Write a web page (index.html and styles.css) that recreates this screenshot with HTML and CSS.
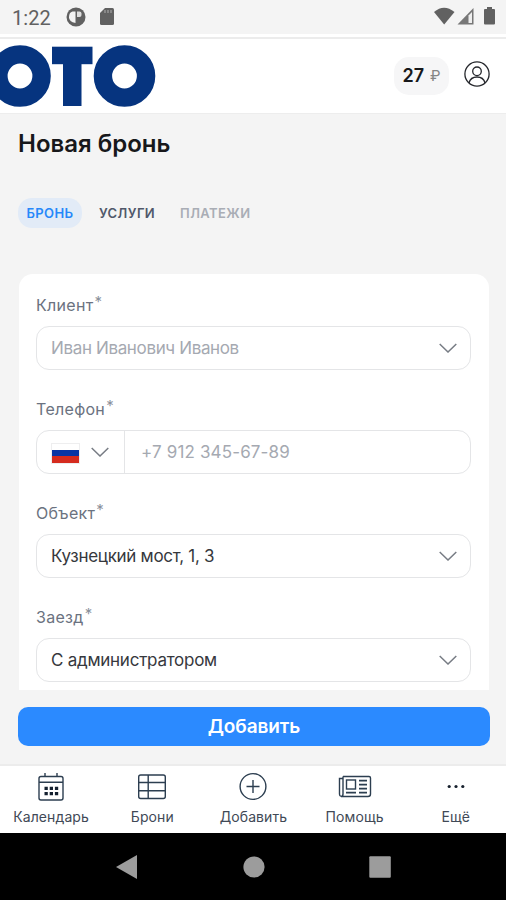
FILE: index.html
```html
<!DOCTYPE html>
<html lang="ru">
<head>
<meta charset="utf-8">
<title>Новая бронь</title>
<link rel="stylesheet" href="styles.css">
</head>
<body>
<div class="status">
  <span class="clock">1:22</span>
  <svg class="st-app" width="20" height="20" viewBox="0 0 20 20"><circle cx="10" cy="10" r="9.500" fill="#616161"/><path d="M9.500 4.500v11.500Q3 15 3 10.200T6.500 4.500z" fill="#f4f4f4"/><path d="M11 4.500h2.500q2 0 2 2v1.500q0 2-2 2H11z" fill="#dedede"/></svg>
  <svg class="st-card" width="16" height="20" viewBox="0 0 16 20"><path d="M6 1h7.500Q15 1 15 2.500v14q0 1.500-1.500 1.500h-11Q1 18 1 16.500V6z" fill="#616161"/><path d="M6 3v3M9 3v3M12 3v3" stroke="#999" stroke-width="1.400"/></svg>
  <svg class="st-right" width="64" height="20" viewBox="0 0 64 20"><path d="M1 5q10-8.500 20.500 0L11.200 17.500z" fill="#616161"/><path d="M24.500 17.500L40.500 1v16.500z" fill="#777"/><path d="M35.500 8.500l3.500-3.500v11h-3.500z" fill="#eee"/><path d="M54 0h5v2h2q1 0 1 1v13.500q0 1-1 1h-9q-1 0-1-1V3q0-1 1-1h2z" fill="#616161"/></svg>
</div>
<header class="header">
  <svg class="logo" width="156" height="64" viewBox="0 0 156 64" role="img" aria-label="ОТО">
    <g fill="none" stroke="#06347f"><circle cx="20" cy="32" r="21.600" stroke-width="18.400"/><circle cx="124.500" cy="32" r="21.600" stroke-width="18.400"/></g>
    <g fill="#06347f"><rect x="52" y="2.700" width="40.500" height="17.500"/><rect x="63" y="3" width="18.500" height="59"/></g>
  </svg>
  <div class="balance"><b>27</b><span>₽</span></div>
  <svg class="user" width="26" height="26" viewBox="0 0 26 26" fill="none" stroke="#26282d" stroke-width="1.300"><circle cx="13" cy="13" r="12.100"/><circle cx="13" cy="10.300" r="4.300"/><path d="M5 22q1.500-6 8-6t8 6"/></svg>
</header>
<main class="main">
  <h1 class="title">Новая бронь</h1>
  <nav class="tabs"><span class="tab active">БРОНЬ</span><span class="tab services">УСЛУГИ</span><span class="tab disabled">ПЛАТЕЖИ</span></nav>
  <section class="card">
    <div class="field"><label><span>Клиент</span><sup>*</sup></label>
      <div class="input"><span class="ph name">Иван Иванович Иванов</span><svg class="chev" width="18" height="10" viewBox="0 0 18 10"><path d="M.7 1L9 9l8.300-8"/></svg></div></div>
    <div class="field"><label><span>Телефон</span><sup>*</sup></label>
      <div class="input phone"><div class="country"><div class="flag"><i></i><i></i><i></i></div><svg class="chev" width="18" height="10" viewBox="0 0 18 10"><path d="M.7 1L9 9l8.300-8"/></svg></div><span class="ph number">+7 912 345-67-89</span></div></div>
    <div class="field"><label><span>Объект</span><sup>*</sup></label>
      <div class="input"><span class="place">Кузнецкий мост, 1, 3</span><svg class="chev" width="18" height="10" viewBox="0 0 18 10"><path d="M.7 1L9 9l8.300-8"/></svg></div></div>
    <div class="field"><label><span>Заезд</span><sup>*</sup></label>
      <div class="input"><span class="admin">С администратором</span><svg class="chev" width="18" height="10" viewBox="0 0 18 10"><path d="M.7 1L9 9l8.300-8"/></svg></div></div>
  </section>
  <button class="submit"><span>Добавить</span></button>
</main>
<nav class="bottom">
  <div class="item"><svg width="34" height="30" viewBox="0 0 34 30" fill="none" stroke="#2c3e50" stroke-width="1.400"><rect x="5" y="4.500" width="24" height="23.500" rx="2"/><path d="M5 10.200h24M11 1v4M23 1v4"/><path d="M10.500 16.300h13.700M10.500 21.600h13.700" stroke="#14202f" stroke-width="3.200" stroke-dasharray="3.300 1.900"/></svg><span>Календарь</span></div>
  <div class="item"><svg width="34" height="30" viewBox="0 0 34 30" fill="none" stroke="#2c3e50" stroke-width="1.400"><rect x="3.700" y="3" width="26.600" height="23.500" rx="2"/><path d="M3.700 10.500h26.600M3.700 18.700h26.600M13.200 3v23.500"/></svg><span>Брони</span></div>
  <div class="item"><svg width="34" height="30" viewBox="0 0 34 30" fill="none" stroke="#2c3e50" stroke-width="1.400"><circle cx="17" cy="14.500" r="12.900"/><path d="M17 8v13M10.500 14.500h13"/></svg><span>Добавить</span></div>
  <div class="item"><svg width="34" height="30" viewBox="0 0 34 30" fill="none" stroke="#2c3e50" stroke-width="1.400"><path d="M5 4.500h26q1.500 0 1.500 1.500v16q0 2.500-2.500 2.500H4q-2.500 0-2.500-2.500V6.500H5v15.500q0 2.500-2 2.500M5 4.500v3"/><rect x="8.500" y="8" width="9" height="9"/><path d="M21 8.700h8M21 12.700h8M21 16.700h8M21 20.700h8M8 20.700h10" stroke-width="1.800"/></svg><span>Помощь</span></div>
  <div class="item"><svg width="34" height="30" viewBox="0 0 34 30" fill="#17202d"><circle cx="10.200" cy="14.500" r="1.600"/><circle cx="17" cy="14.500" r="1.600"/><circle cx="23.800" cy="14.500" r="1.600"/></svg><span>Ещё</span></div>
</nav>
<footer class="system">
  <svg width="24" height="26" viewBox="0 0 24 26"><path d="M1 13L22 1v24z" fill="#9c9c9c"/></svg>
  <svg width="24" height="26" viewBox="0 0 24 26"><circle cx="12" cy="13" r="10.600" fill="#9c9c9c"/></svg>
  <svg width="24" height="26" viewBox="0 0 24 26"><rect x="1.300" y="2.300" width="21.500" height="21.500" rx="1" fill="#9c9c9c"/></svg>
</footer>
</body>
</html>
```
FILE: styles.css
```css
* { box-sizing: border-box; }
body { margin: 0; width: 506px; height: 900px; overflow: hidden; display: flex; flex-direction: column; background: #f4f4f4; font-family: Inter, "Liberation Sans", sans-serif; color: #26282d; }
svg { display: block; flex: none; }
span { white-space: nowrap; }
.status { height: 34px; flex: none; display: flex; align-items: center; padding: 0 9px 0 12px; }
.clock { font: 20px/34px Roboto, sans-serif; color: #616161; width: 54px; letter-spacing: .1px; padding-top: 2px; }
.st-card { margin-left: 13px; }
.st-right { margin-left: auto; }
.header { height: 80px; flex: none; display: flex; align-items: center; padding: 4px 15px 0 0; background: linear-gradient(#fff 0 3px, #ececec 3px 5px, #fff 5px); border-bottom: 1px solid #ededed; }
.balance { margin-left: auto; width: 55px; height: 38px; border-radius: 15px; background: #f6f6f7; display: flex; align-items: center; justify-content: center; gap: 6px; font-size: 18px; }
.balance b { font-weight: 600; color: #17181b; }
.balance span { font-size: 15px; color: #858585; }
.user { margin: 0 1px 3px 15px; }
.main { height: 650px; flex: none; padding: 15px 17px 0 18px; display: flex; flex-direction: column; }
.title { margin: 0; font-size: 24px; line-height: 30px; font-weight: 600; color: #17181b; white-space: nowrap; }
.tabs { display: flex; align-items: center; height: 30px; margin-top: 39px; font-size: 13px; font-weight: 600; letter-spacing: .4px; color: #50586a; }
.tab.active { width: 64px; height: 30px; line-height: 30px; border-radius: 14px; background: #e2ebf7; color: #2688fa; text-align: center; }
.services { margin-left: 17px; }
.disabled { margin-left: 25px; color: #a9adb5; }
.card { height: 416px; margin-top: 46px; margin-left: 1px; background: #fff; border-radius: 14px 14px 0 0; padding: 20px 18px 0 17px; }
.field { height: 104.100px; }
label { display: flex; height: 23px; line-height: 23px; font-size: 16px; letter-spacing: .3px; color: #6b7280; }
sup { font-size: 15px; line-height: 16px; margin-left: 1px; color: #8b919b; }
.input { margin-top: 9px; height: 44px; border: 1.500px solid #e4e5e7; border-radius: 13px; display: flex; align-items: center; padding: 0 13px 0 14px; font-size: 17px; color: #36383d; }
.input > .chev { margin-left: auto; }
.chev { fill: none; stroke: #777c84; stroke-width: 1.500; }
.ph { color: #a5a9b1; }
.name { letter-spacing: -.36px; }
.place { letter-spacing: -.3px; }
.admin { letter-spacing: -.25px; }
.phone { padding-left: 0; }
.country { width: 88px; height: 100%; border-right: 1.500px solid #e4e5e7; display: flex; align-items: center; padding-left: 14px; gap: 11px; }
.flag { width: 29px; height: 21px; margin-top: 2px; border: 1px solid #eeeeef; display: flex; flex-direction: column; }
.flag i { flex: 1; background: #fff; }
.flag i:nth-child(2) { background: #0835a5; }
.flag i:nth-child(3) { background: #d52b1e; }
.number { margin-left: 16px; letter-spacing: .15px; }
.submit { height: 39px; margin-top: 17px; flex: none; width: 472px; padding: 0; border: 0; border-radius: 10px; background: #2b8aff; color: #fff; font: 600 19px/39px Inter, sans-serif; letter-spacing: -.1px; }
.bottom { height: 69px; flex: none; border-top: 2px solid #ececec; background: #fff; display: grid; grid-template-columns: repeat(5, 101.200px); padding: 6px 0 0 .5px; }
.item { display: flex; flex-direction: column; align-items: center; font-size: 14px; line-height: 20px; letter-spacing: .1px; color: #414956; }
.item span { margin-top: 5px; }
.system { height: 67px; background: #000; display: flex; justify-content: space-between; align-items: center; padding: 0 114px 0 115px; }
```
